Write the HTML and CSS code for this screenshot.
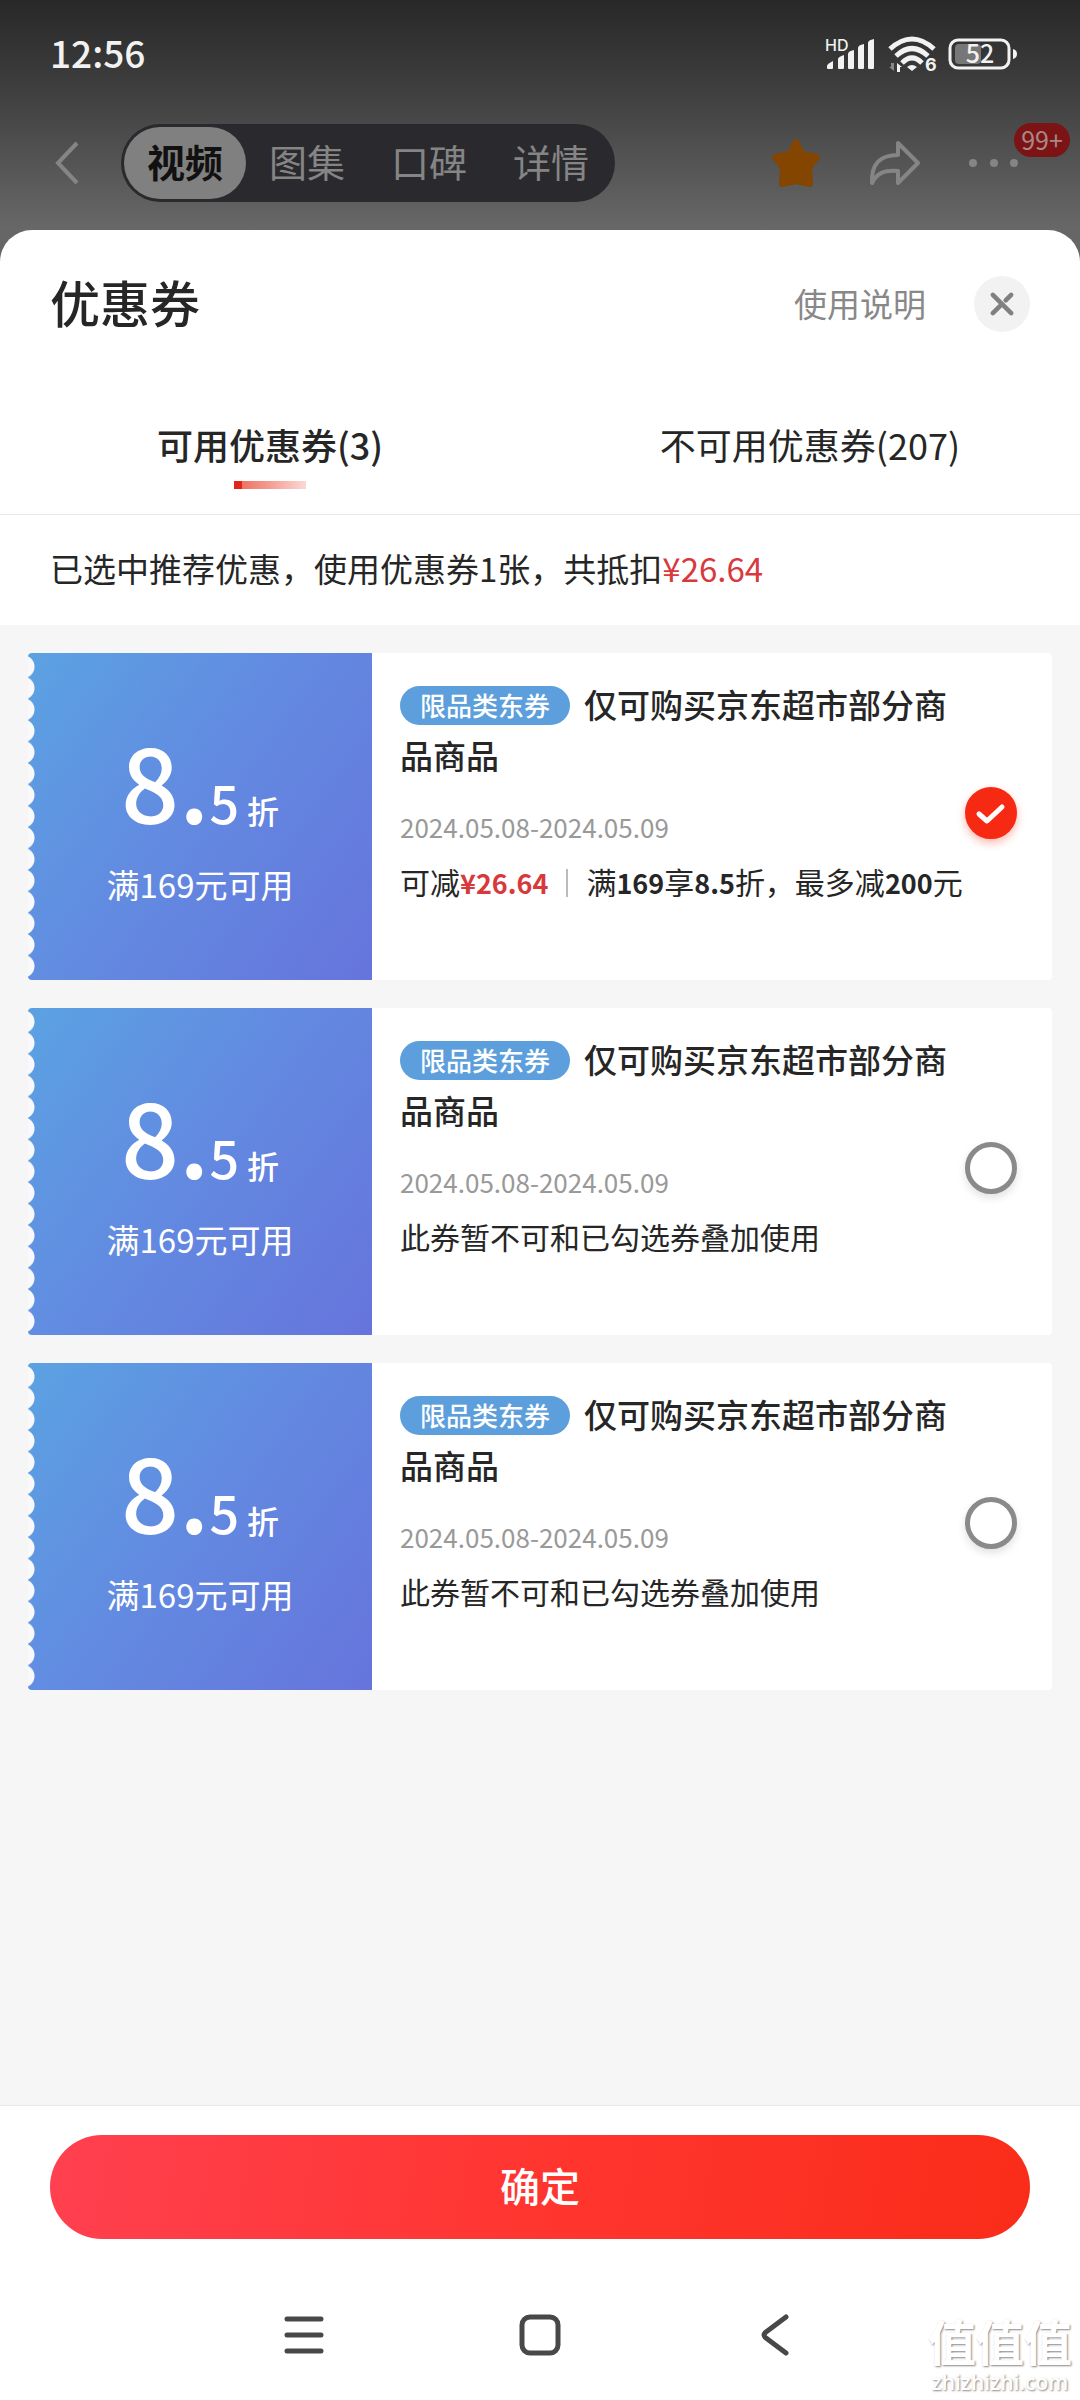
FILE: index.html
```html
<!DOCTYPE html>
<html lang="zh-CN">
<head>
<meta charset="utf-8">
<meta name="viewport" content="width=device-width, initial-scale=1">
<title>优惠券</title>
<link rel="stylesheet" href="styles.css">
</head>
<body>
<header class="top">
  <div class="status">
    <time class="clock">12:56</time>
    <div class="status-icons">
      <svg class="signal" viewBox="0 0 52 36" aria-hidden="true">
        <text x="1" y="15" class="hd">HD</text>
        <path d="M3 30q0-2 6-5v7q0 1-1 1H4q-1 0-1-1zM14 23q0-2 6-4v13q0 1-1 1h-4q-1 0-1-1zM24 18q0-3 6-4v18q0 1-1 1h-4q-1 0-1-1zM34 12q0-3 6-4v24q0 1-1 1h-4q-1 0-1-1zM44 7q0-3 6-4v29q0 1-1 1h-4q-1 0-1-1z"/>
      </svg>
      <svg class="wifi" viewBox="0 0 48 36" aria-hidden="true">
        <g fill="none" stroke="#f2f2f2" stroke-width="5">
          <path d="M2 13Q24-7 46 13"/><path d="M8 20Q24 5 40 20"/><path d="M14 27Q24 17 34 27"/>
        </g>
        <path d="M19 31q5-4 10 0l-5 4zM9 27l5 4h-2v5H9z"/>
        <path d="M6 27v8l-5-4h2v-4z" fill="#888"/>
        <text x="37" y="35" class="six">6</text>
      </svg>
      <svg class="battery" viewBox="0 0 70 32" aria-hidden="true">
        <rect x="7" y="6" width="26" height="20" rx="4" fill="#777"/>
        <rect x="2" y="2" width="59" height="28" rx="8" fill="none" stroke="#f2f2f2" stroke-width="3"/>
        <path d="M65 11q4 1 4 5t-4 5z"/>
        <text x="32" y="25" text-anchor="middle" class="level">52</text>
      </svg>
    </div>
  </div>
  <nav class="appbar">
    <button class="icon-btn" aria-label="返回">
      <svg class="back" viewBox="0 0 24 44"><path d="M22 2 3 22l19 20"/></svg>
    </button>
    <div class="segments">
      <button class="segment is-active">视频</button>
      <button class="segment">图集</button>
      <button class="segment">口碑</button>
      <button class="segment">详情</button>
    </div>
    <div class="actions">
      <button class="icon-btn" aria-label="收藏">
        <svg class="star" viewBox="0 0 50 50"><path d="M25 4l6 12 15 3-8 11 1 16-14-3-14 3 1-16-8-11 15-3z"/></svg>
      </button>
      <button class="icon-btn" aria-label="分享">
        <svg class="share" viewBox="0 0 52 46"><path d="M29 3l20 20-20 20V31C15 30 8 33 3 43 2 24 11 15 29 15z"/></svg>
      </button>
      <button class="icon-btn more" aria-label="更多">
        <svg class="dots" viewBox="0 0 50 10"><circle cx="4" cy="5" r="4"/><circle cx="25" cy="5" r="4"/><circle cx="45" cy="5" r="4"/></svg>
        <span class="badge">99+</span>
      </button>
    </div>
  </nav>
</header>

<main class="sheet">
  <div class="sheet-head">
    <h1>优惠券</h1>
    <a class="help" href="#help">使用说明</a>
    <button class="close" aria-label="关闭">
      <svg viewBox="0 0 24 24"><path d="M2 2l20 20M2 22l8-8M16 8l6-6"/></svg>
    </button>
  </div>
  <div class="tabs">
    <button class="tab is-active">可用优惠券(3)</button>
    <button class="tab">不可用优惠券(207)</button>
  </div>
  <p class="summary">已选中推荐优惠，使用优惠券1张，共抵扣<span class="price">¥26.64</span></p>

  <ul class="coupons">
    <li>
      <label class="coupon">
        <span class="face">
          <span class="rate"><span class="big">8.</span><span class="mid">5</span><span class="unit">折</span></span>
          <span class="rule">满169元可用</span>
        </span>
        <span class="info">
          <span class="name"><span class="tag">限品类东券</span>仅可购买京东超市部分商品商品</span>
          <span class="date">2024.05.08-2024.05.09</span>
          <span class="note">可减<b class="price">¥26.64</b><span class="bar"></span>满<b>169</b>享<b>8.5</b>折，最多减<b>200</b>元</span>
        </span>
        <span class="pick">
          <input type="checkbox" checked>
          <svg class="tick" viewBox="0 0 52 52" aria-hidden="true"><path d="M14 27l8 7 15-14"/></svg>
        </span>
      </label>
    </li>
    <li>
      <label class="coupon">
        <span class="face">
          <span class="rate"><span class="big">8.</span><span class="mid">5</span><span class="unit">折</span></span>
          <span class="rule">满169元可用</span>
        </span>
        <span class="info">
          <span class="name"><span class="tag">限品类东券</span>仅可购买京东超市部分商品商品</span>
          <span class="date">2024.05.08-2024.05.09</span>
          <span class="note">此券暂不可和已勾选券叠加使用</span>
        </span>
        <span class="pick"><input type="checkbox"></span>
      </label>
    </li>
    <li>
      <label class="coupon">
        <span class="face">
          <span class="rate"><span class="big">8.</span><span class="mid">5</span><span class="unit">折</span></span>
          <span class="rule">满169元可用</span>
        </span>
        <span class="info">
          <span class="name"><span class="tag">限品类东券</span>仅可购买京东超市部分商品商品</span>
          <span class="date">2024.05.08-2024.05.09</span>
          <span class="note">此券暂不可和已勾选券叠加使用</span>
        </span>
        <span class="pick"><input type="checkbox"></span>
      </label>
    </li>
  </ul>

  <div class="confirm-bar"><button class="confirm">确定</button></div>
</main>

<footer class="system-nav">
  <button class="icon-btn" aria-label="最近任务"><svg viewBox="0 0 42 42"><path d="M4 5h34M4 21h34M4 37h34"/></svg></button>
  <button class="icon-btn" aria-label="主屏幕"><svg viewBox="0 0 42 42"><rect x="3" y="3" width="36" height="36" rx="8"/></svg></button>
  <button class="icon-btn" aria-label="返回上级"><svg viewBox="0 0 42 42"><path d="M31 3 11 18q-4 3 0 6l20 15"/></svg></button>
  <div class="watermark"><span class="mark-name">值值值</span><span class="mark-site">zhizhizhi.com</span></div>
</footer>
</body>
</html>
```

FILE: styles.css
```css
* { box-sizing: border-box; margin: 0; padding: 0; }

body {
  display: flex;
  flex-direction: column;
  min-height: 100vh;
  background: #666;
  color: #262626;
  font-family: "Noto Sans CJK SC", sans-serif;
}

button { border: 0; background: none; color: inherit; font: inherit; cursor: pointer; }
svg { display: block; overflow: visible; }
ul { list-style: none; }

.icon-btn { display: flex; flex: none; }

/* Dimmed page behind the sheet */
.top { background: linear-gradient(#282828, #3c3c3c 35%, #686868); }

.status {
  display: flex;
  align-items: center;
  justify-content: space-between;
  height: 108px;
  padding: 0 62px 0 50px;
  color: #f2f2f2;
}
.clock { padding-bottom: 4px; font: 500 37px/40px "Noto Sans CJK SC", sans-serif; }
.status-icons { display: flex; align-items: center; gap: 12px; fill: #f2f2f2; }
.signal { width: 52px; height: 36px; }
.wifi { width: 48px; height: 36px; }
.battery { width: 70px; height: 32px; }
.hd { font: 500 16px Inter, sans-serif; }
.six { font: 700 18px Inter, sans-serif; }
.level { font: 500 25px "Noto Sans CJK SC", sans-serif; }

.appbar {
  display: flex;
  align-items: center;
  padding: 16px 61px 28px 55px;
}
.back { width: 24px; height: 44px; fill: none; stroke: #858585; stroke-width: 4; }
.segments {
  display: grid;
  grid-template-columns: repeat(4, 122px);
  margin-left: 42px;
  padding: 3px;
  border-radius: 39px;
  background: #2a2a2e;
}
.segment {
  height: 72px;
  padding-bottom: 4px;
  border-radius: 36px;
  color: #858585;
  font-size: 38px;
  line-height: 68px;
}
.segment.is-active { background: #808080; color: #111; font-weight: 700; }
.actions { display: flex; align-items: center; gap: 48px; margin-left: auto; }
.star { width: 50px; height: 50px; fill: #844500; stroke: #844500; stroke-width: 6; stroke-linejoin: round; }
.share { width: 52px; height: 46px; fill: none; stroke: #858585; stroke-width: 4; stroke-linejoin: round; }
.dots { width: 50px; height: 10px; fill: #858585; }
.more { position: relative; }
.badge {
  position: absolute;
  left: 45px;
  bottom: 11px;
  width: 56px;
  height: 34px;
  border-radius: 17px;
  background: #7c1416;
  color: #a88;
  font-size: 25px;
  line-height: 32px;
  text-align: center;
}

/* Coupon sheet */
.sheet {
  display: flex;
  flex: 1;
  flex-direction: column;
  border-radius: 32px 32px 0 0;
  background: #fff;
}
.sheet-head { display: flex; align-items: center; height: 148px; padding: 0 50px; }
.sheet-head h1 { flex: 1; padding-bottom: 6px; font-size: 50px; font-weight: 500; line-height: 72px; }
.help { margin-right: 48px; padding-bottom: 3px; color: #888; font-size: 33px; text-decoration: none; }
.close {
  display: grid;
  place-items: center;
  width: 56px;
  height: 56px;
  border-radius: 50%;
  background: #f2f2f2;
}
.close svg { width: 22px; height: 22px; fill: none; stroke: #808080; stroke-width: 5; stroke-linecap: round; }

.tabs { display: grid; grid-template-columns: 1fr 1fr; border-bottom: 1px solid #e8e8e8; }
.tab { position: relative; height: 136px; padding-bottom: 4px; font-size: 36px; }
.tab.is-active { font-weight: 500; }
.tab.is-active::after {
  content: "";
  position: absolute;
  bottom: 25px;
  left: calc(50% - 36px);
  width: 72px;
  height: 8px;
  background: linear-gradient(90deg, #e1251b 8px, #ee7262 8px, #fcd8d4);
}

.summary { padding: 0 50px 4px; font-size: 33px; line-height: 106px; }
.price { color: #d8393d; }

.coupons {
  display: flex;
  flex: 1;
  flex-direction: column;
  gap: 28px;
  padding: 28px;
  background: #f6f6f6;
}
.coupon {
  display: flex;
  min-height: 327px;
  border-radius: 4px;
  background: #fff;
}
/* The left edge is perforated by a column of round notches */
.face {
  display: flex;
  flex: 0 0 344px;
  flex-direction: column;
  align-items: center;
  justify-content: center;
  gap: 20px;
  padding: 3px 0;
  border-radius: 4px 0 0 4px;
  background:
    radial-gradient(circle at -5px 50%, #f9f9fb 11px, transparent 12px) 0 0 / 8px 21px no-repeat round content-box,
    linear-gradient(125deg, #5ba2e2, #628be1 45%, #6674dc);
  color: #fff;
}
.rate { display: flex; align-items: baseline; font-weight: 500; }
.big { font-size: 102px; line-height: 120px; }
.mid { font-size: 52px; line-height: 60px; }
.unit { margin-left: 8px; font-size: 32px; line-height: 40px; }
.rule { padding-bottom: 5px; font-size: 33px; line-height: 48px; }

.info { display: flex; flex: 1; flex-direction: column; min-width: 0; padding: 26px 0 26px 28px; }
.name { font-size: 33px; font-weight: 500; line-height: 51px; }
.tag {
  display: inline-block;
  height: 39px;
  margin-right: 14px;
  padding: 0 20px;
  border-radius: 20px;
  background: #5c9fdc;
  color: #fff;
  font-size: 26px;
  line-height: 37px;
  vertical-align: 2px;
}
.date { margin-top: 26px; color: #999; font-size: 26px; line-height: 40px; }
.note { margin-top: 14px; font-size: 30px; line-height: 40px; white-space: nowrap; }
.note b { font-size: 27px; }
.bar {
  display: inline-block;
  width: 2px;
  height: 28px;
  margin: 0 18px;
  background: #bbb;
  vertical-align: -3px;
}

.pick { display: grid; align-self: center; margin: 0 35px 8px 0; }
.pick input {
  grid-area: 1 / 1;
  width: 52px;
  height: 52px;
  border: 5px solid #8a8a8a;
  border-radius: 50%;
  background: #fff;
  box-shadow: 0 4px 8px #0000001f;
  appearance: none;
}
.pick input:checked { border-color: #f62a12; background: #f62a12; box-shadow: 0 4px 8px #f62a1255; }
.tick {
  grid-area: 1 / 1;
  width: 52px;
  height: 52px;
  fill: none;
  stroke: #fff;
  stroke-width: 5;
  stroke-linecap: round;
  stroke-linejoin: round;
  pointer-events: none;
}

.confirm-bar { padding: 29px 50px 31px; border-top: 1px solid #e8e8e8; }
.confirm {
  display: block;
  width: 100%;
  height: 104px;
  padding-bottom: 4px;
  border-radius: 52px;
  background: linear-gradient(100deg, #ff4050, #ff352f 50%, #fa2c19);
  color: #fff;
  font-size: 40px;
  font-weight: 500;
}

/* System navigation */
.system-nav {
  position: relative;
  display: flex;
  align-items: center;
  justify-content: center;
  gap: 194px;
  height: 130px;
  background: #fff;
}
.system-nav svg { width: 42px; height: 42px; fill: none; stroke: #484848; stroke-width: 5; stroke-linecap: round; }
.watermark {
  position: absolute;
  right: 8px;
  bottom: 4px;
  display: flex;
  flex-direction: column;
  align-items: center;
  color: #fff;
  text-shadow: 1px 1px 2px #888;
}
.mark-name { font-size: 48px; font-weight: 700; line-height: 56px; }
.mark-site { font: 600 21px/28px "Open Sans", sans-serif; }
```
